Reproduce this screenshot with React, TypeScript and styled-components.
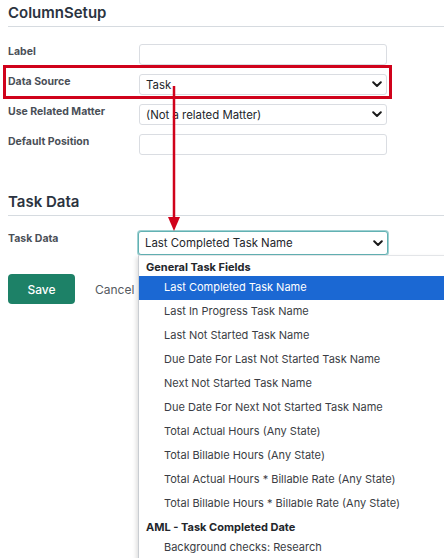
import styled, { createGlobalStyle } from 'styled-components';

const GlobalStyle = createGlobalStyle`
  html, body {
    margin: 0;
    padding: 0;
    background: #fff;
    font-family: Inter, "Noto Sans", "Liberation Sans", sans-serif;
    overflow: hidden;
  }
`;

const Page = styled.div`
  position: relative;
  width: 444px;
  height: 558px;
  padding-left: 8px;
  box-sizing: border-box;
  overflow: hidden;
`;

const SectionTitle = styled.div<{ top: number }>`
  margin-top: ${({ top }) => top}px;
  height: 25px;
  box-sizing: border-box;
  font-size: 15px;
  font-weight: 600;
  color: #2b3340;
  border-bottom: 1px solid #d6dbe0;
  line-height: 22px;
`;

const FormGrid = styled.div<{ top: number }>`
  margin-top: ${({ top }) => top}px;
  display: grid;
  grid-template-columns: 131px 248px;
  row-gap: 9px;
`;

const Label = styled.div<{ pad?: number }>`
  font-size: 10.5px;
  font-weight: 700;
  color: #4a4f57;
  padding-top: ${({ pad }) => pad ?? 2}px;
  line-height: 12px;
`;

const Field = styled.div<{ focused?: boolean; h?: number }>`
  height: ${({ h }) => h ?? 21}px;
  box-sizing: border-box;
  border: 1px solid ${({ focused }) => (focused ? '#62b1b3' : '#dadde2')};
  box-shadow: ${({ focused }) => (focused ? '0 0 0 1px #9fd1d2' : 'none')};
  border-radius: 3px;
  background: #fff;
  display: flex;
  align-items: center;
  justify-content: space-between;
  padding: 0 4px 0 6px;
  font-size: 11.4px;
  color: #23262b;
`;

const FocusedField = styled(Field)`
  width: 250px;
  margin-left: -1px;
`;

const Chevron = () => (
  <svg width="10" height="7" viewBox="0 0 10 7">
    <path d="M1.2 1.3 L5 5 L8.8 1.3" fill="none" stroke="#1a1a1a" strokeWidth="2" strokeLinecap="round" strokeLinejoin="round" />
  </svg>
);

const Actions = styled.div`
  margin-top: 19px;
  display: flex;
  align-items: center;
  gap: 20px;
`;

const SaveButton = styled.button`
  width: 67px;
  height: 30px;
  border: none;
  border-radius: 4px;
  background: #1d8167;
  color: #fff;
  font-family: inherit;
  font-size: 12px;
  font-weight: 500;
`;

const CancelLink = styled.span`
  font-size: 12px;
  color: #555a61;
`;

const Highlight = styled.div`
  position: absolute;
  left: 3px;
  top: 65px;
  width: 389px;
  height: 34px;
  box-sizing: border-box;
  border: 3px solid #d0021b;
`;

const Arrow = styled.svg`
  position: absolute;
  left: 166px;
  top: 86px;
`;

const Menu = styled.div`
  position: absolute;
  left: 138px;
  top: 255px;
  width: 320px;
  height: 320px;
  background: #fff;
  border-left: 1px solid #c9cdd2;
  border-top: 1px solid #e3e5e8;
  box-shadow: -2px 2px 4px rgba(0, 0, 0, 0.12);
`;

const GroupHeader = styled.div`
  height: 20px;
  line-height: 22px;
  padding-left: 7px;
  font-size: 11px;
  font-weight: 700;
  color: #23262b;
`;

const Option = styled.div<{ active?: boolean }>`
  height: 24px;
  line-height: 23px;
  padding-left: 25px;
  font-size: 11px;
  color: ${({ active }) => (active ? '#fff' : '#3a3d44')};
  background: ${({ active }) => (active ? '#1b68d3' : 'transparent')};
`;

const generalFields = [
  'Last Completed Task Name',
  'Last In Progress Task Name',
  'Last Not Started Task Name',
  'Due Date For Last Not Started Task Name',
  'Next Not Started Task Name',
  'Due Date For Next Not Started Task Name',
  'Total Actual Hours (Any State)',
  'Total Billable Hours (Any State)',
  'Total Actual Hours * Billable Rate (Any State)',
  'Total Billable Hours * Billable Rate (Any State)',
];

export default function App() {
  return (
    <Page>
      <GlobalStyle />
      <SectionTitle top={2}>ColumnSetup</SectionTitle>
      <FormGrid top={17}>
        <Label>Label</Label>
        <Field />
        <Label>Data Source</Label>
        <Field>
          Task
          <Chevron />
        </Field>
        <Label>Use Related Matter</Label>
        <Field>
          (Not a related Matter)
          <Chevron />
        </Field>
        <Label>Default Position</Label>
        <Field />
      </FormGrid>
      <SectionTitle top={36}>Task Data</SectionTitle>
      <FormGrid top={15}>
        <Label pad={2}>Task Data</Label>
        <FocusedField focused h={24}>
          Last Completed Task Name
          <Chevron />
        </FocusedField>
      </FormGrid>
      <Actions>
        <SaveButton>Save</SaveButton>
        <CancelLink>Cancel</CancelLink>
      </Actions>

      <Highlight />
      <Arrow width="16" height="146" viewBox="0 0 16 146">
        <line x1="8" y1="0" x2="8" y2="134" stroke="#d0021b" strokeWidth="2.5" />
        <polygon points="2,131 14,131 8,145" fill="#d0021b" />
      </Arrow>

      <Menu>
        <GroupHeader>General Task Fields</GroupHeader>
        {generalFields.map((f, i) => (
          <Option key={f} active={i === 0}>
            {f}
          </Option>
        ))}
        <GroupHeader>AML - Task Completed Date</GroupHeader>
        <Option>Background checks: Research</Option>
      </Menu>
    </Page>
  );
}
